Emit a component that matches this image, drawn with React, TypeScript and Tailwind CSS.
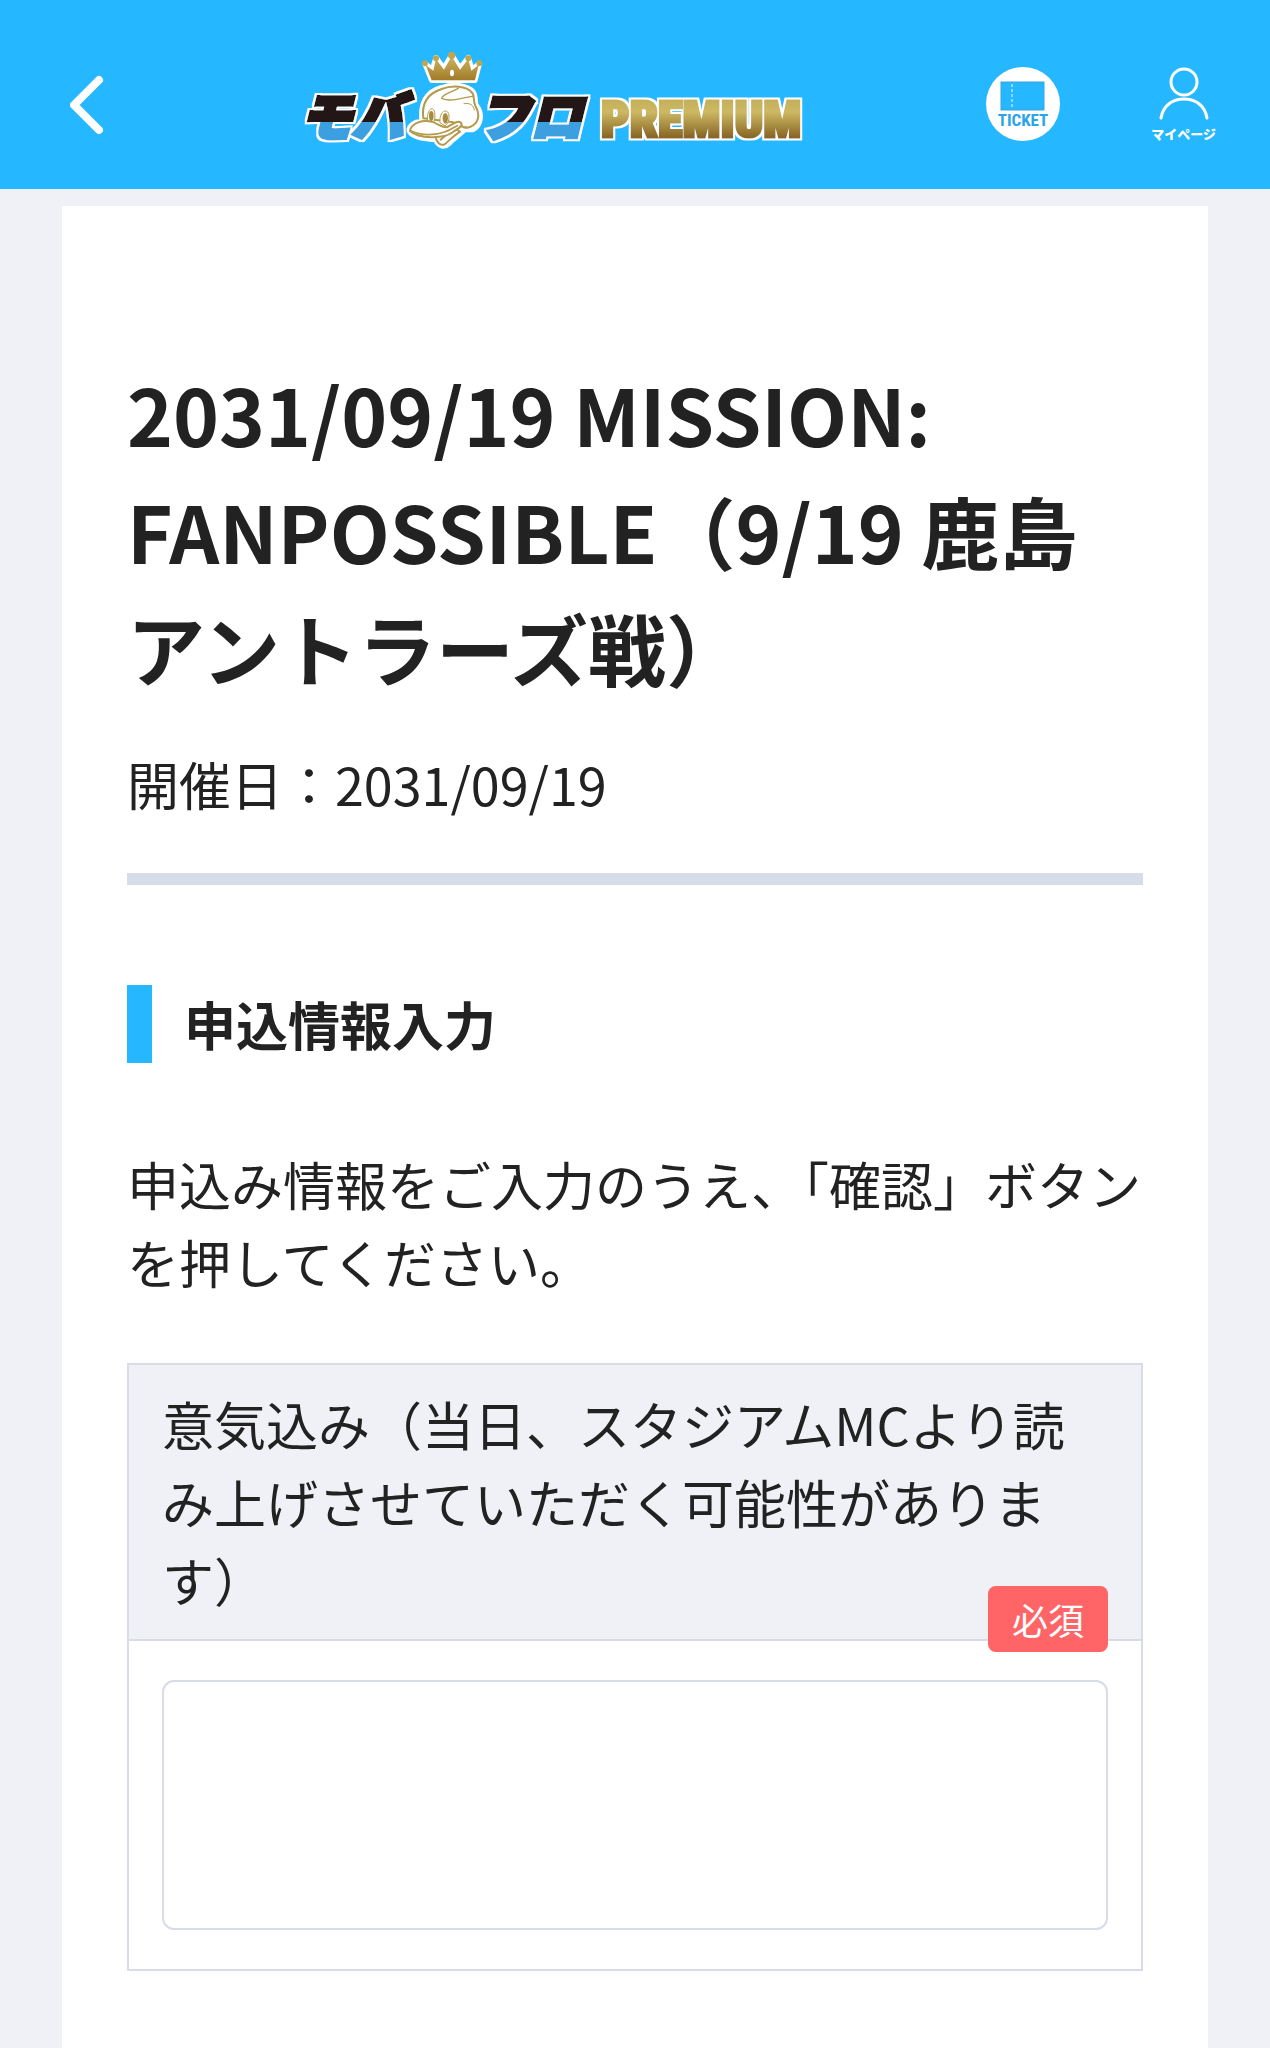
const BackIcon = () => (
  <svg width="34" height="60" viewBox="0 0 34 60" fill="none" aria-hidden="true">
    <path
      d="M29 5 L4 30 L29 55"
      stroke="#fff"
      strokeWidth="8"
      strokeLinecap="round"
      strokeLinejoin="round"
    />
  </svg>
);

const Logo = () => (
  <svg width="510" height="119" viewBox="0 0 510 119" role="img" aria-label="モバフロ PREMIUM">
    <defs>
      <linearGradient id="ink" gradientUnits="userSpaceOnUse" x1="0" y1="48" x2="0" y2="98">
        <stop offset="0.58" stopColor="#231815" />
        <stop offset="0.58" stopColor="#3a9fe0" />
      </linearGradient>
      <linearGradient id="gold" gradientUnits="userSpaceOnUse" x1="0" y1="52" x2="0" y2="94">
        <stop offset="0" stopColor="#c2ad55" />
        <stop offset="0.35" stopColor="#cdb964" />
        <stop offset="1" stopColor="#84601f" />
      </linearGradient>
      <linearGradient id="crown" x1="0" y1="0" x2="0" y2="1">
        <stop offset="0" stopColor="#cdb560" />
        <stop offset="1" stopColor="#a07a28" />
      </linearGradient>
      {/* White rim around the lettering */}
      <filter id="rim" filterUnits="userSpaceOnUse" x="0" y="0" width="510" height="119">
        <feMorphology in="SourceAlpha" operator="dilate" radius="2" result="fat" />
        <feFlood floodColor="#fff" />
        <feComposite in2="fat" operator="in" result="edge" />
        <feMerge>
          <feMergeNode in="edge" />
          <feMergeNode in="SourceGraphic" />
        </feMerge>
      </filter>
    </defs>

    {/* Wordmark */}
    <g
      fill="url(#ink)"
      stroke="url(#ink)"
      strokeWidth="4"
      filter="url(#rim)"
      className="font-['Noto_Sans_CJK_JP',sans-serif] text-[52px] font-black italic"
    >
      <text x="0" y="91">モバ</text>
      <text x="178" y="91">フロ</text>
    </g>
    <text
      x="301"
      y="92"
      fill="url(#gold)"
      stroke="url(#gold)"
      strokeWidth="3"
      filter="url(#rim)"
      className="font-['Roboto_Condensed',Roboto,sans-serif] text-[50px] font-black"
    >
      PREMIUM
    </text>

    {/* Mascot */}
    <g transform="translate(-10 -10) scale(0.3333)" strokeLinejoin="round" strokeLinecap="round">
      <g fill="#fff" stroke="#fff" strokeWidth="16">
        <path d="M425 136 L405 86 L427 104 L438 68 L461 100 L485 60 L510 100 L535 68 L546 104 L568 86 L555 136 Z" />
        <path d="M396 262 C390 205 410 170 455 158 C485 148 530 148 550 172 C560 185 552 195 558 210 C578 235 575 270 548 284 L523 284 C508 302 486 312 478 325 C462 340 444 332 437 314 C405 312 365 306 358 288 C356 270 378 258 396 262 Z" />
      </g>
      <path
        fill="url(#crown)"
        d="M425 136 L407 90 L430 107 L438 72 L462 104 L485 64 L510 104 L535 72 L544 107 L566 90 L555 136 Z"
      />
      <g fill="#c2a64e">
        <circle cx="405" cy="85" r="9" />
        <circle cx="438" cy="70" r="9" />
        <circle cx="485" cy="61" r="11" />
        <circle cx="535" cy="70" r="9" />
        <circle cx="568" cy="85" r="9" />
      </g>
      <ellipse cx="486" cy="114" rx="6" ry="10" fill="#fff" />
      <g fill="#fff" stroke="#b39a4c" strokeWidth="6">
        <path d="M400 250 C394 205 415 175 455 162 C485 150 530 152 545 172 C556 182 548 196 556 212 C572 240 566 266 540 276 C525 284 510 270 490 262 Z" />
        <path d="M455 190 C480 202 505 190 548 184 M455 190 C458 176 485 172 505 160" fill="none" strokeWidth="4" />
        <path d="M522 206 C540 202 552 212 553 225" fill="none" strokeWidth="3" />
        <path d="M412 255 C410 226 428 208 434 232 C436 246 434 258 430 264 Z" strokeWidth="3" />
        <path d="M450 262 C446 230 472 216 477 240 C478 256 474 266 466 272 Z" strokeWidth="3" />
        <path d="M436 304 C440 322 450 334 464 328 C476 318 486 306 510 290 L490 278 Z" />
        <path d="M452 314 L468 300" fill="none" />
        <path d="M360 288 C364 262 400 254 425 260 C445 266 455 280 472 276 C490 268 502 254 514 264 C520 276 500 282 488 292 C462 312 386 312 360 288 Z" />
        <path d="M364 288 C395 304 440 300 466 290 C484 284 492 276 502 272" fill="none" strokeWidth="5" />
      </g>
      <g fill="#a88c3c">
        <ellipse cx="424" cy="243" rx="7" ry="15" />
        <ellipse cx="466" cy="250" rx="8" ry="16" />
      </g>
    </g>
  </svg>
);

const TicketIcon = () => (
  <svg width="75" height="75" viewBox="0 0 75 75" aria-hidden="true">
    <circle cx="37" cy="37" r="37" fill="#fff" />
    <rect x="15" y="15" width="43" height="28" fill="#25b7ff" stroke="#3aa4dd" strokeWidth="1" />
    <path d="M26 17 V42" stroke="#fff" strokeWidth="1" strokeDasharray="3 2" />
    <text
      x="37"
      y="59"
      textAnchor="middle"
      fill="#2aa5e6"
      className="font-['Roboto_Condensed',Roboto,sans-serif] text-[17px] font-bold"
    >
      TICKET
    </text>
  </svg>
);

const UserIcon = () => (
  <svg width="52" height="54" viewBox="0 0 52 54" fill="none" stroke="#fff" strokeWidth="3" strokeLinecap="round" aria-hidden="true">
    <circle cx="26" cy="16" r="13" />
    <path d="M3 52 C5 40 14 33 26 33 C38 33 47 40 49 52" />
  </svg>
);

const Header = () => (
  <header className="flex h-[189px] items-center justify-between bg-[#25b7ff] pl-[70px] pr-[54px] pt-5">
    <button type="button" aria-label="戻る" className="w-[54px]">
      <BackIcon />
    </button>
    <a href="#" className="block">
      <Logo />
    </a>
    <nav className="flex items-center gap-[90px]">
      <a href="#" aria-label="TICKET">
        <TicketIcon />
      </a>
      <a href="#" className="flex flex-col items-center text-[13px] leading-5 font-black text-white">
        <UserIcon />
        <span className="pt-1">マイページ</span>
      </a>
    </nav>
  </header>
);

const App = () => {
  return (
    <div
      lang="ja"
      className="min-h-screen bg-[#eff1f7] font-['Noto_Sans_CJK_JP',sans-serif] text-[52px] leading-[78px] text-[#222]"
    >
      <Header />

      <main className="mx-[62px] mt-[17px] min-h-[1842px] bg-white px-[65px] pt-[149px]">
        <h1 className="text-[78px] leading-[117px] font-bold">
          2031/09/19 MISSION: FANPOSSIBLE（9/19 鹿島アントラーズ戦）
        </h1>
        <p className="mt-[39px]">開催日：2031/09/19</p>
        <hr className="mt-[50px] border-t-12 border-[#d6dde9]" />

        <h2 className="mt-[100px] border-l-25 border-[#25b7ff] pl-8 font-bold">申込情報入力</h2>
        <p className="mt-[82px]">
          申込み情報をご入力のうえ、「確認」ボタンを押してください。
        </p>

        {/* Form */}
        <form className="mt-[62px] border-2 border-[#d8dce8]">
          <div className="relative border-b-2 border-[#d8dce8] bg-[#eff1f7] px-[33px] py-5">
            <label htmlFor="message">
              意気込み（当日、スタジアムMCより読み上げさせていただく可能性があります）
            </label>
            <span className="absolute right-[33px] -bottom-[13px] rounded-lg bg-[#ff6467] px-6 py-1.5 text-[36px] leading-[54px] text-white">
              必須
            </span>
          </div>
          <div className="px-[33px] py-[39px]">
            <textarea
              id="message"
              className="block h-[250px] w-full resize-none rounded-xl border-2 border-[#d8dce8] bg-white p-5"
            />
          </div>
        </form>
      </main>
    </div>
  );
};

export default App;
